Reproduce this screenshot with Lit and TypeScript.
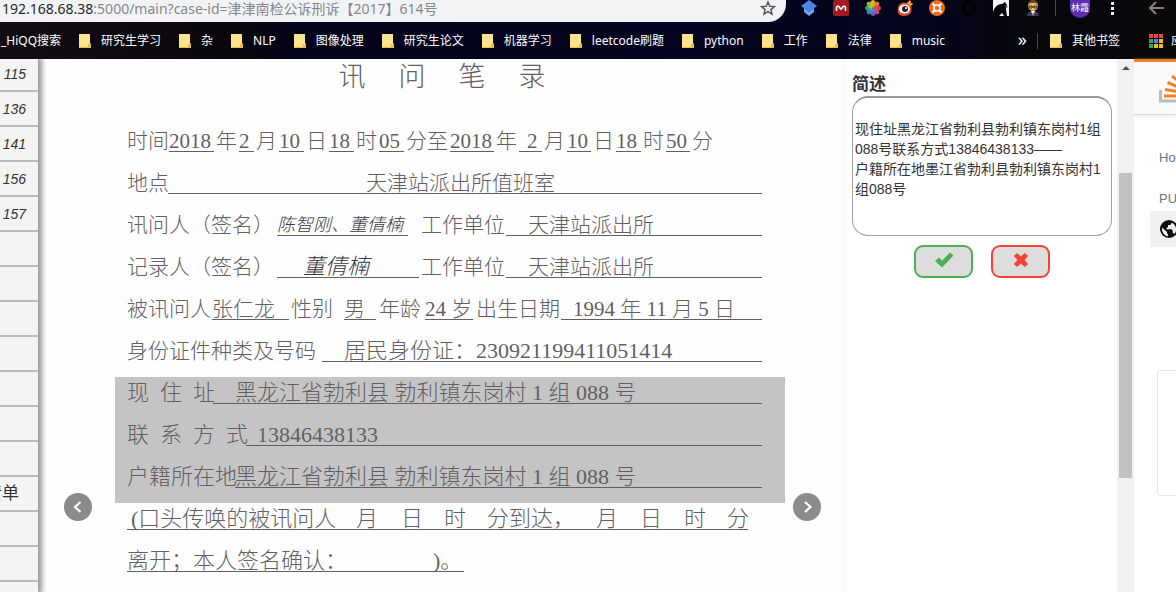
import { LitElement, html, svg, css } from "lit";
import { customElement, property } from "lit/decorators.js";
import { classMap } from "lit/directives/class-map.js";
import { styleMap } from "lit/directives/style-map.js";

interface Segment {
  text: string;
  line?: boolean;
  width?: number;
  indent?: number;
  hand?: boolean;
}

const label = (text: string, width?: number): Segment => ({ text, width });
const field = (text: string, width?: number, indent = 0): Segment => ({
  text,
  width,
  indent,
  line: true,
});
const signed = (text: string, width: number, indent = 0): Segment => ({
  ...field(text, width, indent),
  hand: true,
});
const fill = (text: string, indent = 0): Segment => ({ text, indent, line: true, width: -1 });

const TIME_ROW: Segment[] = [
  label("时间", 40),
  field("2018", 45),
  label("年"),
  field("2", 15),
  label("月"),
  field("10", 25),
  label("日"),
  field("18", 25),
  label("时"),
  field("05", 25),
  label("分至"),
  field("2018", 44),
  label("年"),
  field("2", 23, 8),
  label("月"),
  field("10", 24),
  label("日"),
  field("18", 25),
  label("时"),
  field("50", 24),
  label("分"),
];

const UPPER_ROWS: Segment[][] = [
  [label("地点", 41), fill("天津站派出所值班室", 198)],
  [
    label("讯问人（签名）", 150),
    signed("陈智刚、董倩楠", 131),
    label("", 13),
    label("工作单位", 85),
    fill("天津站派出所", 22),
  ],
  [
    label("记录人（签名）", 150),
    signed("董倩楠", 142, 26),
    label("", 2),
    label("工作单位", 85),
    fill("天津站派出所", 22),
  ],
  [
    label("被讯问人", 85),
    field("张仁龙", 77),
    label("", 2),
    label("性别", 53),
    field("男", 32),
    label("", 3),
    label("年龄", 46),
    field("24 岁", 48),
    label("", 3),
    label("出生日期", 85),
    fill("1994 年 11 月 5 日", 12),
  ],
  [label("身份证件种类及号码", 195), fill("居民身份证：230921199411051414", 22)],
];

const MARKED_ROWS: Segment[][] = [
  [label("现  住  址", 86), fill("黑龙江省勃利县 勃利镇东岗村 1 组 088 号", 22)],
  [label("联  系  方  式", 119), fill("13846438133", 11)],
  [label("户籍所在地", 108), fill("黑龙江省勃利县 勃利镇东岗村 1 组 088 号")],
];

const LOWER_ROWS: Segment[][] = [
  [
    field("(口头传唤的被讯问人", 229, 4),
    field("月", 45),
    field("日", 43),
    field("时", 43),
    field("分到达，", 109),
    field("月", 44),
    field("日", 44),
    field("时", 43),
    field("分", 21),
  ],
  [field("离开；本人签名确认：", 306), field(")。", 31)],
];

@customElement("record-sheet")
export class RecordSheet extends LitElement {
  static styles = css`
    :host {
      display: block;
      color: #625f63;
      font: 300 21px/20px "Liberation Serif", "Noto Sans CJK SC", serif;
    }
    .title {
      display: flex;
      justify-content: center;
      gap: 33px;
      margin: 0;
      height: 66px;
      padding-right: 16px;
      font-size: 27px;
      font-weight: 300;
      line-height: 36px;
    }
    .row {
      display: flex;
      box-sizing: border-box;
      height: 42px;
      padding: 0 23px 0 12px;
    }
    .spaced {
      gap: 2px;
    }
    .marked {
      background: #c4c4c4;
    }
    .marked .row,
    .large .line {
      font-size: 22px;
    }
    .seg {
      flex: none;
      box-sizing: border-box;
      height: 27px;
      padding-top: 6px;
      white-space: pre;
    }
    .line {
      border-bottom: 1px solid #625f63;
    }
    .grow {
      flex: 1;
    }
    .hand {
      font-style: italic;
      font-size: 18px;
      color: #3c393d;
    }
    .hand.wide {
      font-size: 22px;
    }
  `;

  private row(segments: Segment[], extra = "") {
    return html`<div class="row ${extra}">
      ${segments.map((s) => {
        const style: Record<string, string> = {};
        if (s.width && s.width > 0) style.width = `${s.width}px`;
        if (s.indent) style.paddingLeft = `${s.indent}px`;
        const classes = {
          seg: true,
          line: !!s.line,
          grow: s.width === -1,
          hand: !!s.hand,
          wide: !!s.hand && s.text.length < 4,
        };
        return html`<span class=${classMap(classes)} style=${styleMap(style)}>${s.text}</span>`;
      })}
    </div>`;
  }

  render() {
    return html`
      <h1 class="title">${[..."讯问笔录"].map((c) => html`<span>${c}</span>`)}</h1>
      ${this.row(TIME_ROW, "spaced")}
      ${UPPER_ROWS.map((r, i) => this.row(r, i === UPPER_ROWS.length - 1 ? "large" : ""))}
      <div class="marked">${MARKED_ROWS.map((r) => this.row(r))}</div>
      ${LOWER_ROWS.map((r) => this.row(r, "large"))}
    `;
  }
}

const petals = ["#f6c51f", "#f28c1e", "#e8453c", "#d04a9b", "#8a5cc4", "#3f8ee0", "#3bb573", "#a6cf3a"];

const EXTENSIONS = [
  svg`<path d="M8 0 0 6l8 6 8-6z" fill="#4a86e8"/><path d="M3 8v4l5 4 5-4V8l-5 4z" fill="#6ea3f5"/>`,
  svg`<rect width="16" height="16" rx="2" fill="#a11c22"/><path d="M3.500 11V8a1.500 1.500 0 0 1 3-.5L8 9l1.500-1.500a1.500 1.500 0 0 1 3 .5v3" fill="none" stroke="#fff" stroke-width="1.600"/>`,
  svg`${petals.map((c, i) => svg`<ellipse cx="8" cy="3.800" rx="2.600" ry="3.800" fill=${c} fill-opacity=".9" transform="rotate(${i * 45} 8 8)"/>`)}`,
  svg`<path d="M1 7C3 2 8 2 10 3l3-3 1 3 2 1-2 2c2 5-1 10-7 10S0 12 1 7z" fill="#e6452f"/><ellipse cx="7.500" cy="9" rx="5.500" ry="4.500" fill="#fff"/><circle cx="8" cy="9" r="3" fill="#222"/><circle cx="9" cy="8" r="1" fill="#fff"/><path d="M10 3l3-3 1 3 2 1-3 2z" fill="#f6a623"/>`,
  svg`<circle cx="8" cy="8" r="8" fill="#f26b21"/><circle cx="8" cy="8" r="3" fill="none" stroke="#fff" stroke-width="1.500"/><path d="M3.500 3.500l2.500 2.500M12.500 3.500L10 6M3.500 12.500L6 10M12.500 12.500L10 10" stroke="#fff" stroke-width="2"/>`,
  svg`<circle cx="8" cy="8" r="6" fill="none" stroke="#000" stroke-width="4"/>`,
  svg`<path d="M0 0h16v16H0z" fill="#f4f4f4"/><path d="M0 16v-4c2-6 5-8 9-8l3-2 2 3-1 4 1 7h-3l-2-3-3 3z" fill="#080808"/><path d="M12 5l3 1-2 2z" fill="#d33"/>`,
  svg`<path d="M2 16c0-4 3-5 6-5s6 1 6 5z" fill="#2e4057"/><circle cx="8" cy="6" r="5" fill="#f0b45a"/><path d="M3 5c0-7 10-7 10 0L11 3H5z" fill="#6b4423"/><path d="M4 6h3v2H4zM9 6h3v2H9zM7 7h2" fill="none" stroke="#333"/><path d="M6 11l2 5 2-5z" fill="#fff"/><path d="M8 12l-1 3 1 1 1-1z" fill="#e33"/>`,
];

const FOLDERS = ["研究生学习", "杂", "NLP", "图像处理", "研究生论文", "机器学习", "leetcode刷题", "python", "工作", "法律", "music"];

const folderIcon = html`<svg class="folder" width="12" height="14" viewBox="0 0 12 14" aria-hidden="true">
  <path d="M0 0h11v9l1 1v4H0z" fill="#ffe490" />
  <path d="M9 10h3v4H9zM0 13h12v1H0z" fill="#e9bd45" />
</svg>`;

const barStyles = css`
  a {
    color: inherit;
    text-decoration: none;
  }
  button {
    padding: 0;
    border: 0;
    background: none;
    font: inherit;
    color: inherit;
  }
  svg {
    display: block;
    flex: none;
  }
  .toolbar {
    display: flex;
    height: 22px;
  }
  .bookmarks {
    display: flex;
    align-items: center;
    height: 37px;
    color: #fff;
    font: 12px/18px "Noto Sans", "Noto Sans CJK SC", sans-serif;
    white-space: nowrap;
  }
`;

@customElement("browser-bars")
export class BrowserBars extends LitElement {
  @property() address = "";

  static styles = [
    barStyles,
    css`
      :host {
        display: block;
        background: linear-gradient(90deg, #120d12 0, #0a070c 20%, #03031c 27%, #040420 60%, #05051c 82%, #07070d 90%);
      }
      .omnibox {
        display: flex;
        flex: 1;
        align-items: flex-start;
        min-width: 0;
        padding-right: 10px;
        border-bottom-right-radius: 18px;
        background: #f1f3f4;
        color: #84888c;
        font: 14px/17px "Noto Sans", "Noto Sans CJK SC", sans-serif;
      }
      .url {
        flex: 1;
        padding-left: 2px;
        white-space: nowrap;
      }
      .host {
        color: #26282b;
      }
      .tools {
        display: flex;
        flex: none;
        gap: 16px;
        padding: 0 14px 0 15px;
      }
      .rule {
        width: 1px;
        height: 16px;
        background: #4a4a55;
      }
      .account {
        display: flex;
        gap: 14px;
        align-items: flex-start;
        padding-right: 17px;
      }
      .avatar {
        width: 20px;
        height: 18px;
        border-radius: 0 0 10px 10px;
        margin-right: 3px;
        background: #5b2fb0;
        color: #fff;
        font: 9px/16px "Noto Sans CJK SC", sans-serif;
        text-align: center;
      }
      .links {
        display: flex;
        flex: 1;
        gap: 18px;
        padding-left: 1px;
      }
      .link,
      .other {
        display: flex;
        gap: 10px;
        align-items: center;
      }
      .more {
        padding: 0 10px 3px 0;
        font-size: 18px;
      }
      .other {
        padding: 0 14px 0 12px;
      }
    `,
  ];

  render() {
    const [host, ...rest] = this.address.split(":");
    return html`
      <div class="toolbar">
        <div class="omnibox">
          <span class="url"><span class="host">${host}</span>:${rest.join(":")}</span>
          <button aria-label="收藏">
            <svg width="16" height="16" viewBox="0 0 16 16">
              <path d="M8 2l1.800 4.200 4.600.4-3.500 3 1.100 4.500L8 11.700l-4 2.400 1.100-4.500-3.500-3 4.600-.4z" fill="none" stroke="#55595e" stroke-width="1.500" />
            </svg>
          </button>
        </div>
        <div class="tools">
          ${EXTENSIONS.map((icon) => html`<svg width="16" height="16" viewBox="0 0 16 16" aria-hidden="true">${icon}</svg>`)}
        </div>
        <div class="account">
          <span class="rule"></span>
          <div class="avatar">林霞</div>
          <svg width="10" height="16" viewBox="0 0 10 16" aria-hidden="true">
            <path d="M4 2h3v3H4zM4 7h3v3H4zM4 12h3v3H4z" fill="#f0f0f0" />
          </svg>
        </div>
      </div>
      <nav class="bookmarks">
        <div class="links">
          <a class="link" href="#">_HiQQ搜索</a>
          ${FOLDERS.map((name) => html`<a class="link" href="#">${folderIcon}${name}</a>`)}
        </div>
        <span class="more">»</span>
        <span class="rule"></span>
        <a class="other" href="#">${folderIcon}其他书签</a>
      </nav>
    `;
  }
}

const APP_COLORS = ["#ea4335", "#ea4335", "#ea4335", "#34a853", "#4285f4", "#fbbc05", "#34a853", "#fbbc05", "#fbbc05"];

@customElement("second-window")
export class SecondWindow extends LitElement {
  static styles = [
    barStyles,
    css`
      :host {
        display: flex;
        flex-direction: column;
        overflow: hidden;
        background: #fff;
        color: #6a737c;
        font: 13px/18px "Liberation Sans", sans-serif;
      }
      .chrome {
        background: #0a070a;
      }
      .toolbar {
        padding-left: 14px;
      }
      .toolbar svg {
        margin-bottom: 6px;
      }
      .bookmarks {
        gap: 8px;
        padding-left: 15px;
      }
      .header {
        height: 52px;
        border-top: 3px solid #f48024;
        border-bottom: 1px solid #d9dadc;
        background: #fafafb;
        box-shadow: 0 1px 3px #e4e5e7;
      }
      .logo {
        margin: 9px 0 0 25px;
      }
      .menu {
        display: flex;
        flex-direction: column;
        padding-top: 34px;
        white-space: nowrap;
      }
      .menu a {
        padding-left: 25px;
      }
      .group {
        padding: 23px 0 3px 25px;
      }
      .menu .active {
        margin-left: 16px;
        padding: 9px 0 9px 10px;
        background: #eff0f1;
      }
      .card {
        width: 60px;
        height: 124px;
        margin: 123px 0 0 23px;
        border: 1px solid #e4e6e8;
        border-radius: 3px;
      }
    `,
  ];

  render() {
    return html`
      <div class="chrome">
        <div class="toolbar">
          <button aria-label="后退">
            <svg width="16" height="16" viewBox="0 0 16 16">
              <path d="M16 8H3M8 2L2 8l6 6" fill="none" stroke="#85807f" stroke-width="2" />
            </svg>
          </button>
        </div>
        <div class="bookmarks">
          <svg width="14" height="14" viewBox="0 0 14 14" aria-hidden="true">
            ${APP_COLORS.map((c, i) => svg`<rect x=${(i % 3) * 5} y=${Math.floor(i / 3) * 5} width="4" height="4" fill=${c}/>`)}
          </svg>
          <span>应用</span>
        </div>
      </div>
      <header class="header">
        <svg class="logo" width="32" height="32" viewBox="0 0 32 32" aria-hidden="true">
          <path d="M1.500 19v11H26V19" fill="none" stroke="#bcbbbb" stroke-width="3" />
          <path d="M5 25h17M6 18.500l16 2.500M8.500 11.500l14 6M13 5l12 9.500M20 0l8 12" stroke="#f48024" stroke-width="3" />
        </svg>
      </header>
      <nav class="menu">
        <a href="#">Home</a>
        <span class="group">PUBLIC</span>
        <a class="active" href="#" aria-label="Stack Overflow">
          <svg width="18" height="18" viewBox="0 0 18 18">
            <circle cx="9" cy="9" r="9" fill="#0c0d0e" />
            <path d="M2.200 7.500L7 12v1.200L8 14.500v1.700C4 15.700 1.500 12 2.200 7.500zM11.500 2.500v1.200L10 5H8v2L6.500 8v1.200h5l1.200 1.200V13l2 .8c2.500-3 1.800-9-3.200-11.300z" fill="#eff0f1" />
          </svg>
        </a>
      </nav>
      <div class="card"></div>
    `;
  }
}

const SIDE_ROWS = ["115", "136", "141", "156", "157", "", "", "", "", "", "", "", "清单", "", "", ""];

const SUMMARY = `现住址黑龙江省勃利县勃利镇东岗村1组088号联系方式13846438133——
户籍所在地墨江省勃利县勃利镇东岗村1组088号`;

@customElement("app-root")
export class AppRoot extends LitElement {
  static styles = css`
    :host {
      display: flex;
      height: 100vh;
      overflow: hidden;
      background: #fff;
      color: #333;
      font: 14px/20px "Liberation Sans", "Noto Sans CJK SC", sans-serif;
    }
    .window {
      display: flex;
      flex: 1;
      flex-direction: column;
      min-width: 0;
    }
    .second {
      flex: none;
      width: 42px;
    }
    .main {
      display: flex;
      flex: 1;
      min-height: 0;
      overflow: hidden;
    }
    .index {
      z-index: 1;
      flex: none;
      width: 38px;
      overflow: hidden;
      box-shadow: 2px 0 5px 2px #999;
    }
    .entries {
      width: 100%;
      margin-top: -2px;
      table-layout: fixed;
      border-spacing: 0;
      background: #f4f4f4;
    }
    .entries td {
      box-sizing: border-box;
      height: 35px;
      padding: 0 12px 0 0;
      border-bottom: 2px solid #bbb;
      font-style: italic;
      text-align: right;
      white-space: nowrap;
    }
    .entries .name {
      padding-right: 19px;
      font-size: 17px;
      font-style: normal;
    }
    .entry {
      display: flex;
      justify-content: flex-end;
    }
    .viewer {
      display: flex;
      flex: 1;
      min-width: 0;
      padding: 0 22px 0 26px;
      border-right: 1px solid #f6f6f6;
      background: #fefefe;
    }
    .sheet {
      flex: 1;
      min-width: 0;
      margin: 0 8px 0 23px;
    }
    .arrow {
      align-self: flex-end;
      flex: none;
      width: 28px;
      height: 28px;
      margin-bottom: 71px;
      padding: 0;
      border: 0;
      border-radius: 50%;
      background: #8b8b8b;
    }
    svg {
      display: block;
      margin: auto;
    }
    .panel {
      display: flex;
      flex: none;
      flex-direction: column;
      box-sizing: border-box;
      width: 273px;
      padding: 14px 5px 0 8px;
    }
    .caption {
      font-size: 17px;
      font-weight: 700;
      line-height: 23px;
    }
    .summary {
      box-sizing: border-box;
      height: 140px;
      padding: 21px 8px 0 2px;
      border: 1px solid #a0a0a0;
      border-top: 2px solid #999;
      border-radius: 16px;
      outline: 0;
      background: #fff;
      color: #333;
      font: inherit;
      resize: none;
      overflow: hidden;
      word-break: break-all;
    }
    .actions {
      display: flex;
      justify-content: center;
      gap: 18px;
      padding-top: 9px;
    }
    .action {
      box-sizing: border-box;
      width: 59px;
      height: 33px;
      padding: 0 0 4px;
      border: 2px solid;
      border-radius: 9px;
      background: #ddd;
    }
    .accept {
      color: #4caf50;
    }
    .reject {
      color: #f44336;
    }
    .track {
      flex: none;
      box-sizing: border-box;
      width: 17px;
      padding: 7px 2px 0;
      background: #f1f1f1;
    }
    .thumb {
      height: 305px;
      margin-top: 103px;
      background: #c1c1c1;
    }
  `;

  render() {
    return html`
      <div class="window">
        <browser-bars address="192.168.68.38:5000/main?case-id=津津南检公诉刑诉【2017】614号"></browser-bars>
        <div class="main">
          <aside class="index">
            <table class="entries">
              <tbody>
                ${SIDE_ROWS.map(
                  (t) => html`<tr><td class=${t.length === 2 ? "name" : ""}><div class="entry"><span>${t}</span></div></td></tr>`,
                )}
              </tbody>
            </table>
          </aside>
          <main class="viewer">
            <button class="arrow" aria-label="上一页">
              <svg width="12" height="12" viewBox="0 0 12 12"><path d="M8.500 1L3 6l5.500 5" fill="none" stroke="#fff" stroke-width="2.200" /></svg>
            </button>
            <record-sheet class="sheet"></record-sheet>
            <button class="arrow" aria-label="下一页">
              <svg width="12" height="12" viewBox="0 0 12 12"><path d="M4 1l5.500 5L4 11" fill="none" stroke="#fff" stroke-width="2.200" /></svg>
            </button>
          </main>
          <section class="panel">
            <label class="caption" for="summary">简述</label>
            <textarea class="summary" id="summary" spellcheck="false" .value=${SUMMARY}></textarea>
            <div class="actions">
              <button class="action accept" aria-label="确认">
                <svg width="20" height="16" viewBox="0 0 20 16"><path d="M1 9l4-3.500 3 3.200L16 .5 19.500 3.500 8 15.500z" fill="currentColor" /></svg>
              </button>
              <button class="action reject" aria-label="取消">
                <svg width="16" height="16" viewBox="0 0 16 16"><path d="M4 1l4 3.500L12 1l3.200 3L11.500 8l3.700 4L12 15l-4-3.500L4 15 .8 12l3.700-4L.8 4z" fill="currentColor" /></svg>
              </button>
            </div>
          </section>
          <div class="track">
            <svg width="8" height="4" viewBox="0 0 8 4" aria-hidden="true"><path d="M4 0l4 4H0z" fill="#505050" /></svg>
            <div class="thumb"></div>
          </div>
        </div>
      </div>
      <second-window class="second"></second-window>
    `;
  }
}
